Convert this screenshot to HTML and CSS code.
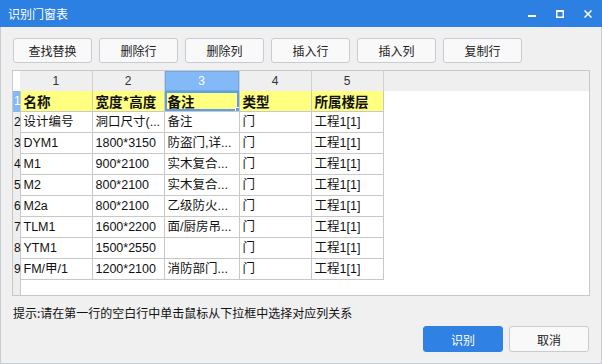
FILE: index.html
```html
<!DOCTYPE html>
<html lang="zh-CN">
<head>
    <meta charset="UTF-8">
    <title>识别门窗表</title>
    <link rel="stylesheet" href="styles.css">
</head>
<body>
    <div class="window">
        <div class="titlebar">
            <span class="title">识别门窗表</span>
            <div class="controls">
                <svg width="8" height="8" viewBox="0 0 8 8"><rect x="0" y="5" width="8" height="2" fill="#fff"/></svg>
                <svg width="8" height="8" viewBox="0 0 8 8"><rect x="0.75" y="0.75" width="6.5" height="6.5" fill="none" stroke="#fff" stroke-width="1.5"/><rect x="0" y="0" width="8" height="2" fill="#fff"/></svg>
                <svg width="8" height="8" viewBox="0 0 8 8"><path d="M0.5 0.5L7.5 7.5M7.5 0.5L0.5 7.5" stroke="#fff" stroke-width="1.5"/></svg>
            </div>
        </div>
        <div class="content">
            <div class="toolbar">
                <button class="btn">查找替换</button>
                <button class="btn">删除行</button>
                <button class="btn">删除列</button>
                <button class="btn">插入行</button>
                <button class="btn">插入列</button>
                <button class="btn">复制行</button>
            </div>
            <div class="grid">
                <table>
                    <colgroup>
                        <col class="c-rn">
                        <col class="c1">
                        <col class="c2">
                        <col class="c3">
                        <col class="c4">
                        <col class="c5">
                        <col>
                    </colgroup>
                    <thead>
                        <tr>
                            <th class="corner"></th>
                            <th>1</th>
                            <th>2</th>
                            <th class="active">3</th>
                            <th>4</th>
                            <th>5</th>
                            <th class="fill"></th>
                        </tr>
                    </thead>
                    <tbody>
                        <tr class="map-row">
                            <td class="rn active">1</td>
                            <td>名称</td>
                            <td>宽度*高度</td>
                            <td class="selected">备注</td>
                            <td>类型</td>
                            <td>所属楼层</td>
                            <td class="fill"></td>
                        </tr>
                        <tr><td class="rn">2</td><td>设计编号</td><td>洞口尺寸(...</td><td>备注</td><td>门</td><td>工程1[1]</td><td class="fill"></td></tr>
                        <tr><td class="rn">3</td><td>DYM1</td><td>1800*3150</td><td>防盗门,详...</td><td>门</td><td>工程1[1]</td><td class="fill"></td></tr>
                        <tr><td class="rn">4</td><td>M1</td><td>900*2100</td><td>实木复合...</td><td>门</td><td>工程1[1]</td><td class="fill"></td></tr>
                        <tr><td class="rn">5</td><td>M2</td><td>800*2100</td><td>实木复合...</td><td>门</td><td>工程1[1]</td><td class="fill"></td></tr>
                        <tr><td class="rn">6</td><td>M2a</td><td>800*2100</td><td>乙级防火...</td><td>门</td><td>工程1[1]</td><td class="fill"></td></tr>
                        <tr><td class="rn">7</td><td>TLM1</td><td>1600*2200</td><td>面/厨房吊...</td><td>门</td><td>工程1[1]</td><td class="fill"></td></tr>
                        <tr><td class="rn">8</td><td>YTM1</td><td>1500*2550</td><td></td><td>门</td><td>工程1[1]</td><td class="fill"></td></tr>
                        <tr><td class="rn">9</td><td>FM/甲/1</td><td>1200*2100</td><td>消防部门...</td><td>门</td><td>工程1[1]</td><td class="fill"></td></tr>
                        <tr class="spare"><td class="rn"></td><td class="fill" colspan="6"></td></tr>
                    </tbody>
                </table>
            </div>
            <p class="hint">提示:请在第一行的空白行中单击鼠标从下拉框中选择对应列关系</p>
            <div class="actions">
                <button class="btn primary">识别</button>
                <button class="btn">取消</button>
            </div>
        </div>
    </div>
</body>
</html>
```

FILE: styles.css
```css
body {
    margin: 0;
    font-family: "Liberation Sans", "Noto Sans CJK SC", sans-serif;
    font-size: 12px;
    color: #222;
}
.window {
    width: 602px;
    height: 364px;
    box-sizing: border-box;
    background: #f0f0f0;
    border: 1px solid #c7cbd2;
    border-top: none;
    display: flex;
    flex-direction: column;
}
.titlebar {
    height: 27px;
    margin: 0 -1px;
    background: #2c80e1;
    display: flex;
    align-items: center;
    justify-content: space-between;
    padding: 0 10px 0 8px;
}
.title {
    color: #fff;
    font-size: 12px;
    font-family: "Noto Sans CJK SC", sans-serif;
}
.controls {
    display: flex;
    gap: 20px;
    padding-top: 1px;
}
.controls svg {
    display: block;
}
.content {
    padding: 11px 11px 0 11px;
    display: flex;
    flex-direction: column;
}
.toolbar {
    display: flex;
    gap: 7px;
    padding-left: 1px;
}
.btn {
    width: 79px;
    height: 25px;
    padding: 0;
    border: 1px solid #c6cbd4;
    border-radius: 3px;
    background: #f9f9fa;
    font-family: "Noto Sans CJK SC", sans-serif;
    font-size: 12px;
    color: #222;
}
.grid {
    margin-top: 7px;
    height: 226px;
    box-sizing: border-box;
    border: 1px solid #c8c8c8;
    background: #fff;
    overflow: hidden;
}
table {
    width: 100%;
    border-collapse: collapse;
    table-layout: fixed;
}
.c-rn { width: 7px; }
.c1 { width: 72px; }
.c2 { width: 72px; }
.c3 { width: 75px; }
.c4 { width: 72px; }
.c5 { width: 72px; }
th {
    height: 20px;
    padding: 0;
    background: #efefef;
    font-weight: normal;
    font-size: 12px;
    color: #333;
    border-right: 1px solid #d2d2d2;
}
th.corner {
    background: #fff;
    border-right: none;
}
th.fill {
    border-right: none;
}
th.active {
    background: #82b9f6;
    color: #fff;
    box-shadow: inset 0 0 0 1px #6ea9ec;
}
td {
    height: 20px;
    padding: 0 0 0 3px;
    border: 1px solid #c8c8c8;
    border-top: none;
    font-size: 12.5px;
    line-height: 18px;
    white-space: nowrap;
    overflow: hidden;
    color: #111;
}
td.rn {
    padding: 0 0 0 1px;
    background: #eeeeee;
    border-left: none;
    border-bottom: none;
    font-size: 12px;
    overflow: visible;
}
td.rn.active {
    background: #82b9f6;
    color: #fff;
}
td.fill {
    border: none;
    background: #fff;
}
.map-row td {
    background: #ffff80;
    font-family: "Noto Sans CJK SC", sans-serif;
    font-weight: bold;
    font-size: 13.5px;
}
.map-row td.rn {
    font-family: "Liberation Sans", sans-serif;
    font-weight: normal;
    font-size: 12px;
    background: #82b9f6;
}
.map-row td.fill {
    background: #fff;
}
td.selected {
    position: relative;
    box-shadow: inset 0 0 0 2px #5f9fe7;
}
td.selected::after {
    content: '';
    position: absolute;
    right: -2px;
    bottom: -2px;
    width: 4px;
    height: 4px;
    background: #5f9fe7;
    border: 1px solid #fff;
}
.spare td {
    height: 16px;
}
.hint {
    margin: 9px 0 0 1px;
    line-height: 16px;
    font-family: "Noto Sans CJK SC", sans-serif;
    font-size: 12px;
    color: #111;
}
.actions {
    display: flex;
    justify-content: flex-end;
    gap: 6px;
    margin-top: 5px;
    padding-right: 1px;
}
.actions .btn {
    width: 80px;
    height: 26px;
}
.btn.primary {
    background: #2f82e3;
    border-color: #2f82e3;
    color: #fff;
}
```
